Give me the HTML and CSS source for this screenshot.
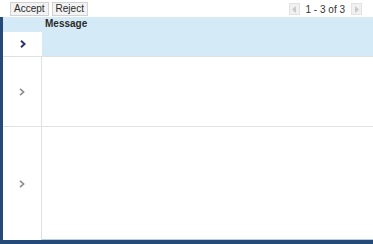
FILE: index.html
```html
<!DOCTYPE html>
<html>
<head>
<meta charset="utf-8">
<link rel="stylesheet" href="styles.css">
</head>
<body>
<div class="toolbar">
  <button class="btn">Accept</button>
  <button class="btn">Reject</button>
  <div class="pager">
    <span class="pg-btn"><svg width="5" height="7" viewBox="0 0 5 7"><path d="M4 0 L0 3.5 L4 7 Z" fill="#c8c8c8"/></svg></span>
    <span class="pg-text">1 - 3 of 3</span>
    <span class="pg-btn"><svg width="5" height="7" viewBox="0 0 5 7"><path d="M1 0 L5 3.5 L1 7 Z" fill="#c8c8c8"/></svg></span>
  </div>
</div>
<div class="grid">
  <div class="hdr-corner"></div>
  <div class="hdr-msg">Message</div>
  <div class="rh rh-sel"><svg class="chev" width="6" height="8" viewBox="0 0 6 8"><path d="M1 0.8 L4.6 4 L1 7.2" fill="none" stroke="#2b3468" stroke-width="2"/></svg></div>
  <div class="cell cell-sel"></div>
  <div class="rh r2"><svg class="chev" width="6" height="8" viewBox="0 0 6 8"><path d="M1 0.8 L4.6 4 L1 7.2" fill="none" stroke="#8a8a8a" stroke-width="1.6"/></svg></div>
  <div class="cell r2"></div>
  <div class="rh r3"><svg class="chev" width="6" height="8" viewBox="0 0 6 8"><path d="M1 0.8 L4.6 4 L1 7.2" fill="none" stroke="#8a8a8a" stroke-width="1.6"/></svg></div>
  <div class="cell r3"></div>
</div>
</body>
</html>
```
FILE: styles.css
```css
html, body {
  margin: 0;
  padding: 0;
  width: 373px;
  height: 244px;
  overflow: hidden;
  background: #ffffff;
  font-family: "Liberation Sans", Arial, sans-serif;
}
.toolbar {
  height: 17px;
  display: flex;
  align-items: center;
  padding-left: 10px;
  padding-right: 11px;
  gap: 3px;
  box-sizing: border-box;
}
.btn {
  height: 14px;
  margin-top: 1px;
  padding: 0 3px;
  border: 1px solid #d2d2d2;
  background: #f3f3f3;
  font-family: "Liberation Sans", Arial, sans-serif;
  font-size: 10px;
  line-height: 12px;
  color: #2a2a2a;
  border-radius: 0;
}
.pager {
  margin-left: auto;
  display: flex;
  align-items: center;
  gap: 6px;
  margin-top: 1px;
}
.pg-btn {
  width: 11px;
  height: 12px;
  border: 1px solid #e2e2e2;
  background: #f1f1f1;
  display: flex;
  align-items: center;
  justify-content: center;
  box-sizing: border-box;
}
.pg-text {
  font-size: 10px;
  color: #333;
}
.grid {
  height: 227px;
  display: grid;
  grid-template-columns: 39px 1fr;
  grid-template-rows: 15px 25px 70px 113px;
  border-left: 3px solid #234a78;
  border-bottom: 4px solid #234a78;
  box-shadow: inset 0 -1px 0 #b8cde4;
  box-sizing: border-box;
}
.hdr-corner {
  background: #d5eaf7;
}
.hdr-msg {
  background: #d5eaf7;
  font-weight: bold;
  font-size: 10px;
  color: #2a2a2a;
  padding-left: 3px;
  line-height: 14px;
}
.rh {
  display: flex;
  align-items: center;
  justify-content: center;
  border-right: 1px solid #e0e0e0;
  border-bottom: 1px solid #e0e0e0;
  background: #fff;
}
.rh-sel {
  border-right: none;
  border-bottom: 1px solid #e0e0e0;
}
.cell-sel {
  background: #d5eaf7;
  border-bottom: 1px solid #c7d5df;
}
.cell {
  border-bottom: 1px solid #e0e0e0;
}
.r3 {
  border-bottom: none;
}
.chev {
  display: block;
}
```
